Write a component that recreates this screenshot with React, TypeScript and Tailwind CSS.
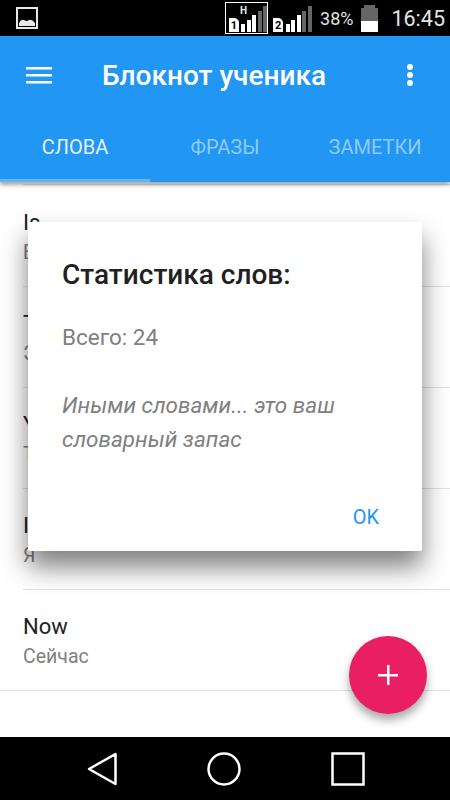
const font = { fontFamily: "Roboto, 'Noto Sans', sans-serif" };

function Signal({ boxed, num }: { boxed?: boolean; num: string }) {
  const bars = [
    { h: 8, c: "#fff" },
    { h: 12, c: "#fff" },
    { h: 17, c: "#fff" },
    { h: 21, c: "#666" },
    { h: 26, c: "#666" },
  ];
  return (
    <div className={boxed ? "relative flex h-[32px] w-[43px] items-end gap-[1.5px] border border-white pb-px pl-[3px]" : "relative ml-[2px] flex h-[32px] w-[42px] items-end gap-[1.5px] pb-[2px] pl-[3px]"}>
      {boxed && <span className="absolute left-[14px] top-[2px] text-[10px] leading-[11px] font-bold text-[#e8e8e8]">H</span>}
      <span className="mr-px flex h-[14px] w-[10px] items-end justify-center rounded-tr-[5px] bg-white text-[11px] leading-[12px] font-bold text-black">{num}</span>
      {bars.map((b, i) => (
        <span key={i} className="w-[4px]" style={{ height: b.h, backgroundColor: b.c }} />
      ))}
    </div>
  );
}

function Row({ a, b, full }: { a: string; b: string; full?: boolean }) {
  return (
    <div className={full ? "h-[101px] border-b border-[#e0e0e0] pl-[23px]" : "ml-[23px] h-[101px] border-b border-[#e0e0e0]"}>
      <div className="pt-[23px] text-[22px] leading-[28px] text-[#212121]">{a}</div>
      <div className="pt-[4px] text-[19.5px] leading-[24px] text-[#808080]">{b}</div>
    </div>
  );
}

export default function App() {
  return (
    <div className="relative flex h-[800px] w-[450px] flex-col overflow-hidden bg-white" style={font}>
      <div className="flex h-[36px] items-center bg-black pl-[16px] pr-[5px] text-white">
        <svg width="22" height="22" viewBox="0 0 22 22" className="mt-[-1px]">
          <rect x="1" y="1" width="20" height="20" fill="none" stroke="#e8e8e8" strokeWidth="2" />
          <path d="M3 19 L3 16 Q5 12 8 13 Q11 15 13 13 Q16 12 19 16 L19 19 Z" fill="#e8e8e8" />
        </svg>
        <div className="ml-auto flex items-center">
          <Signal boxed num="1" />
          <Signal num="2" />
          <span className="ml-[8px] mt-px text-[18px] leading-none text-[#e0e0e0]">38%</span>
          <svg width="17" height="27" viewBox="0 0 17 27" className="ml-[8px]">
            <rect x="3" y="0" width="11" height="3" fill="#666" />
            <rect x="0" y="3" width="17" height="13" fill="#666" />
            <rect x="0" y="16" width="17" height="11" fill="#fff" />
          </svg>
          <span className="ml-[13px] mt-px text-[21.5px] leading-none text-[#e4e4e4]">16:45</span>
        </div>
      </div>

      <div className="z-10 bg-[#2196f3] shadow-[0_3px_4px_rgba(0,0,0,0.35)]">
        <div className="flex h-[78px] items-center pl-[26px] pr-[36px]">
          <svg width="26" height="20" viewBox="0 0 26 20" fill="#fff">
            <rect x="0" y="2" width="26" height="2.5" />
            <rect x="0" y="9" width="26" height="2.5" />
            <rect x="0" y="16" width="26" height="2.5" />
          </svg>
          <div className="ml-[50px] mt-[2px] text-[28px] leading-none font-medium text-white">Блокнот ученика</div>
          <svg width="8" height="24" viewBox="0 0 8 24" fill="#fff" className="ml-auto">
            <circle cx="4" cy="4" r="3" />
            <circle cx="4" cy="12" r="3" />
            <circle cx="4" cy="20" r="3" />
          </svg>
        </div>
        <div className="flex h-[68px] text-[20px] leading-none">
          <div className="flex w-[150px] items-center justify-center border-b-[3px] border-[#64b5f6] text-[#e3f2fd]">СЛОВА</div>
          <div className="flex w-[150px] items-center justify-center pb-[3px] text-[#90caf9]">ФРАЗЫ</div>
          <div className="flex w-[150px] items-center justify-center pb-[3px] text-[#90caf9]">ЗАМЕТКИ</div>
        </div>
      </div>

      <div className="flex-1 overflow-hidden">
        <div className="mb-px ml-[23px] h-[3px] border-b border-[#e0e0e0]" />
        <Row a="Is" b="Быть" />
        <Row a="To" b="Это" />
        <Row a="You" b="Ты" />
        <Row a="I" b="Я" />
        <Row a="Now" b="Сейчас" full />
      </div>

      <div className="flex h-[63px] items-center justify-between bg-black pl-[87px] pr-[85px]">
        <svg width="30" height="34" viewBox="0 0 30 34" fill="none" stroke="#fff" strokeWidth="2.5">
          <path d="M28.5 2 L28.5 32 L2 17 Z" strokeLinejoin="round" />
        </svg>
        <svg width="34" height="34" viewBox="0 0 34 34" fill="none" stroke="#fff" strokeWidth="2.5">
          <circle cx="17" cy="17" r="15.5" />
        </svg>
        <svg width="34" height="34" viewBox="0 0 34 34" fill="none" stroke="#fff" strokeWidth="2.5">
          <rect x="1.5" y="1.5" width="31" height="31" />
        </svg>
      </div>

      <div className="absolute left-[28px] top-[222px] h-[329px] w-[394px] rounded-[2px] bg-white shadow-[0_16px_26px_rgba(0,0,0,0.5)]">
        <div className="pl-[34px] pt-[39px] text-[28px] leading-[28px] font-medium text-[#212121]">Статистика слов:</div>
        <div className="pl-[34px] pt-[34px] text-[22.5px] leading-[28px] text-[#808080]">Всего: 24</div>
        <div className="w-[340px] pl-[34px] pt-[37px] text-[22.5px] leading-[34px] text-[#808080] italic">Иными словами... это ваш словарный запас</div>
        <div className="absolute bottom-[23px] right-[43px] text-[20px] leading-[22px] text-[#2196f3]">OK</div>
      </div>

      <div className="absolute left-[349px] top-[636px] flex h-[78px] w-[78px] items-center justify-center rounded-full bg-[#e91e63] shadow-[0_6px_10px_rgba(0,0,0,0.35)]">
        <svg width="22" height="22" viewBox="0 0 22 22" fill="#fff">
          <rect x="10" y="1" width="2.5" height="20" />
          <rect x="1" y="10" width="20" height="2.5" />
        </svg>
      </div>
    </div>
  );
}
